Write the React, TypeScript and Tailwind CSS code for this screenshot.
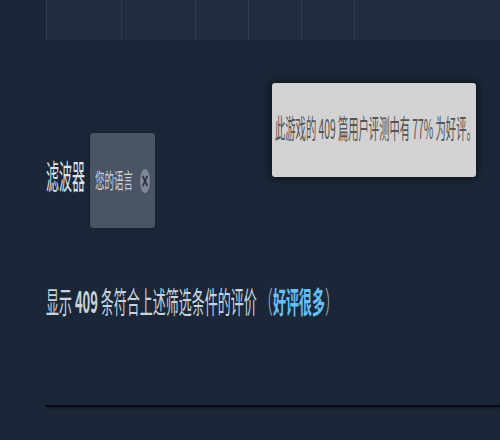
const tabWidths = [75, 74, 53, 53, 53]

const cjk = '"Noto Sans CJK SC", "Liberation Sans", sans-serif'

function CloseBadge() {
  // the picture is squashed sideways, so the badge is a tall ellipse
  return (
    <svg
      width="10"
      height="24"
      viewBox="0 0 10 24"
      preserveAspectRatio="none"
      className="ml-[7px] shrink-0"
    >
      <ellipse cx="5" cy="12" rx="5" ry="12" fill="#7e8794" />
      <path
        d="M3 7.5 L7 16.5 M7 7.5 L3 16.5"
        stroke="#2a3140"
        strokeWidth="1.8"
        strokeLinecap="round"
      />
    </svg>
  )
}

export default function App() {
  return (
    <div
      className="relative h-[440px] w-[500px] overflow-hidden bg-[#1b2738]"
      style={{ fontFamily: cjk }}
    >
      {/* top tab strip */}
      <div className="ml-[46px] flex h-[40px] bg-[#1f2c3f]">
        {tabWidths.map((w, i) => (
          <div
            key={i}
            className="h-full border-l border-[#2c3b50]"
            style={{ width: w }}
          />
        ))}
        <div className="h-full flex-1 border-l border-[#2c3b50]" />
      </div>

      <div className="pl-[46px]">
        {/* filter row */}
        <div className="mt-[93px] flex h-[95px] items-center gap-[5px]">
          <span className="mb-[10px] inline-block text-[13px] leading-none text-[#dfe5eb] [transform:scaleY(2.5)]">
            滤波器
          </span>
          <div className="flex h-[95px] w-[65px] items-center rounded-[3px] bg-[#4b5465] pl-[5px] shadow-[0_0_4px_rgba(0,0,0,0.3)]">
            <span className="inline-block text-[9.5px] leading-none text-[#c8d0da] [transform:scaleY(2.2)]">
              您的语言
            </span>
            <CloseBadge />
          </div>
        </div>

        {/* summary */}
        <div className="mt-[52px] flex h-[40px] items-center">
          <span className="inline-block text-[13px] leading-none whitespace-nowrap text-[#c6d4df] [transform:scaleY(2.3)]">
            显示 <b className="font-bold">409</b> 条符合上述筛选条件的评价
            <span className="ml-[3px] text-[#8fa3b8]">（</span>
            <b className="font-bold text-[#66c0f4]">好评很多</b>
            <span className="text-[#8fa3b8]">）</span>
          </span>
        </div>

        {/* divider */}
        <div className="mt-[85px] h-[2px] bg-[#060b12] shadow-[0_1px_3px_rgba(0,0,0,0.6)]" />
      </div>

      {/* tooltip */}
      <div className="absolute top-[83px] left-[272px] flex h-[94px] w-[204px] items-center rounded-[3px] bg-[#d2d2d3] pb-[2px] pl-[3px] shadow-[0_0_8px_2px_rgba(0,0,0,0.55)]">
        <span className="inline-block text-[10.3px] leading-none whitespace-nowrap text-[#555555] [transform:scaleY(2.6)]">
          此游戏的 409 篇用户评测中有 77% 为好评。
        </span>
      </div>
    </div>
  )
}
